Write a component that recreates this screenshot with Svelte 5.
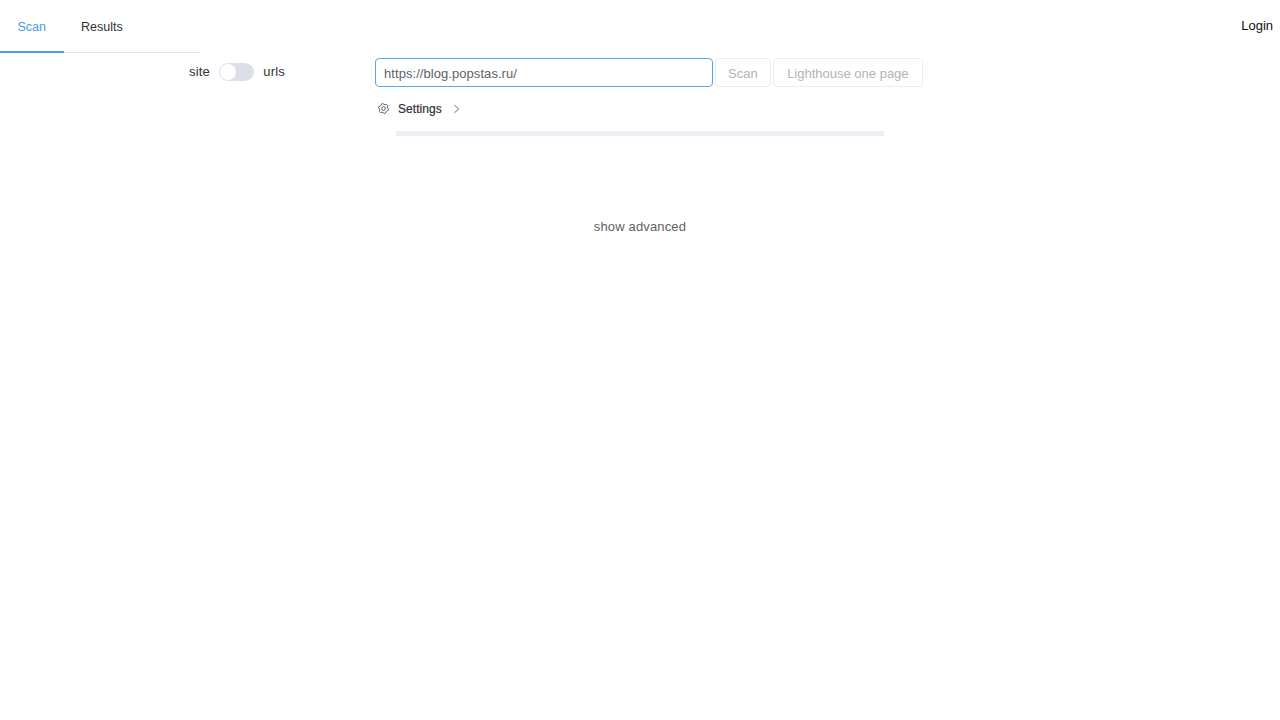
<script>
    let url = "https://blog.popstas.ru/";
    let mode = false;
    let active = "Scan";
    const tabs = ["Scan", "Results"];

    // cog outline, 6 teeth
    let cog = "";
    for (let i = 0; i < 24; i++) {
        let r = i % 4 < 2 ? 11 : 8.8;
        let a = ((i + 0.5) * Math.PI) / 12;
        cog += (i ? "L" : "M") + (12 + r * Math.cos(a)).toFixed(2) + " " + (12 + r * Math.sin(a)).toFixed(2);
    }
    cog += "z";
</script>

<header>
    <nav class="tabs">
        {#each tabs as tab}
            <button class="tab" class:active={tab == active} on:click={() => (active = tab)}>{tab}</button>
        {/each}
    </nav>
    <a class="login" href="#login">Login</a>
</header>

<main>
    <div class="scan-row">
        <div class="mode">
            <span>site</span>
            <button class="switch" class:on={mode} aria-label="mode" on:click={() => (mode = !mode)}><i></i></button>
            <span class="urls">urls</span>
        </div>
        <div class="form">
            <div class="inputs">
                <input type="text" bind:value={url} />
                <button class="btn first" disabled>Scan</button>
                <button class="btn" disabled>Lighthouse one page</button>
            </div>
            <div class="settings">
                <svg viewBox="0 0 24 24" width="11" height="11" fill="none" stroke="#444" stroke-width="1.8">
                    <path d={cog} />
                    <circle cx="12" cy="12" r="4" />
                </svg>
                <span>Settings</span>
                <svg class="chevron" viewBox="0 0 10 14" width="7" height="10" fill="none" stroke="#555" stroke-width="1.300">
                    <path d="M2 1.500L8 7l-6 5.500" />
                </svg>
            </div>
        </div>
    </div>
    <div class="progress"></div>
    <div class="advanced">show advanced</div>
</main>

<style>
    :global(body) {
        font-family: "Liberation Sans", Arial, sans-serif;
        font-size: 13px;
        color: #303133;
        background: #fff;
    }

    header {
        display: flex;
        justify-content: space-between;
        align-items: flex-start;
    }
    .tabs {
        display: flex;
        width: 200px;
        height: 53px;
        box-sizing: border-box;
        border-bottom: 1px solid #e4e7ed;
    }
    .tab {
        height: 53px;
        padding: 2px 17.5px 0;
        border: 0;
        border-bottom: 2px solid transparent;
        background: none;
        font: inherit;
        font-size: 12.5px;
        color: #303133;
    }
    .tab.active {
        color: #46a0ea;
        border-bottom-color: #46a0ea;
    }
    .login {
        margin: 18px 7px 0 0;
        color: #111;
        text-decoration: none;
    }

    .scan-row {
        display: flex;
        margin-top: 5px;
    }
    .mode {
        display: flex;
        align-items: flex-start;
        gap: 9px;
        width: 186px;
        padding: 5px 0 0 189px;
        line-height: 17px;
        letter-spacing: 0.15px;
    }
    .urls {
        margin-left: 0.5px;
    }
    .switch {
        width: 35px;
        height: 18px;
        padding: 1px;
        border: 0;
        border-radius: 9px;
        background: #dcdfe6;
    }
    .switch i {
        display: block;
        width: 16px;
        height: 16px;
        border-radius: 50%;
        background: #fff;
    }
    .switch.on i {
        margin-left: 17px;
    }

    .inputs {
        display: flex;
        height: 29px;
    }
    input {
        width: 338px;
        box-sizing: border-box;
        padding: 1px 8px 0;
        border: 1px solid #56a8ee;
        border-radius: 4px;
        outline: 0;
        font: inherit;
        letter-spacing: 0.06px;
        color: #606266;
    }
    .btn {
        padding: 1px 13.5px 0;
        margin-left: 2px;
        border: 1px solid #ebeef5;
        border-radius: 4px;
        background: #fff;
        font: inherit;
        color: #b0b3b8;
    }
    .btn.first {
        padding: 1px 12px 0;
    }
    .settings {
        display: flex;
        align-items: center;
        height: 15px;
        margin: 14px 0 0 3px;
        font-size: 12px;
        letter-spacing: 0.05px;
        color: #303133;
    }
    .settings span {
        margin-left: 9px;
        -webkit-text-stroke: 0.2px #303133;
    }
    .chevron {
        margin-left: 11px;
    }

    .progress {
        width: 488px;
        height: 5px;
        margin: 15px auto 0;
        background: #ebeef5;
    }
    .advanced {
        margin-top: 82px;
        text-align: center;
        letter-spacing: 0.15px;
        color: #606266;
        line-height: 17px;
    }
</style>
